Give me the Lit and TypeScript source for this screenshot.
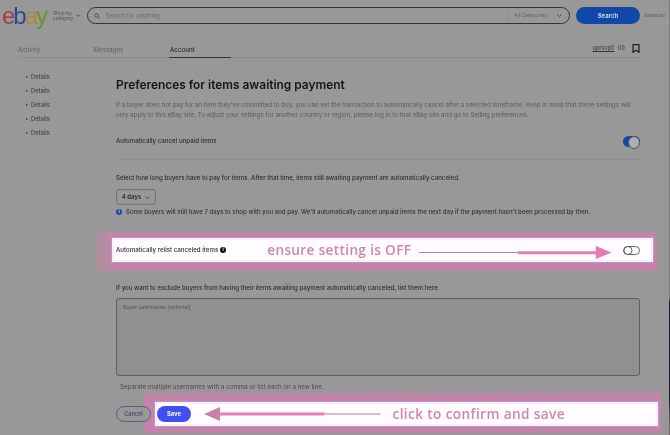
import { LitElement, html, css } from "lit";
import { customElement } from "lit/decorators.js";

const chevron = html`<svg class="chev" viewBox="0 0 10 6"><path d="M1 1l4 4 4-4" fill="none" stroke="currentColor" stroke-width="1.5"/></svg>`;

@customElement("app-root")
export class AppRoot extends LitElement {
  static styles = css`
    :host { display: block; width: 670px; height: 435px; overflow: hidden; }
    * { box-sizing: border-box; }
    .page {
      position: relative; width: 670px; height: 435px; overflow: hidden; background: #989898; color: #333;
      font-family: Inter, "Liberation Sans", sans-serif; font-size: 6.2px; line-height: 10px;
      filter: blur(0.35px); display: flex; flex-direction: column;
    }
    .edge {
      position: absolute; top: 0; right: 0; width: 1px; height: 435px;
      background: linear-gradient(#7c7c7c 0 298px, #1d1436 302px 400px, #7a5a70 420px);
    }
    .header { display: flex; align-items: center; height: 17px; margin: 7px 0 0 2px; flex: none; }
    .logo {
      width: 51px; height: 17px; font: 400 24px/17px "Liberation Sans", sans-serif;
      letter-spacing: -2px; white-space: nowrap; display: block;
    }
    .logo .e { color: #a83a40; } .logo .b { color: #1d4f97; } .logo .a { color: #ad8a3a; } .logo .y { color: #6f8f2d; }
    .shop { width: 20px; font-size: 4.8px; line-height: 5px; color: #555; }
    .shop-chev { width: 4px; height: 3px; margin: 0 7px 0 3px; color: #444; flex: none; }
    .search {
      width: 483px; height: 17px; border: 1px solid #333; border-radius: 9px; display: flex; align-items: center;
      padding: 0 6px 0 6px; color: #6c6c6c; font-size: 5.8px;
    }
    .search svg.mag { width: 6px; height: 6px; margin-right: 6px; color: #444; }
    .search .q { flex: 1; }
    .cat { width: 50px; font-size: 5px; color: #666; border-left: 1px solid #8f8f8f; padding-left: 6px; height: 15px; line-height: 15px; }
    .search .chev { width: 5px; height: 3px; color: #333; margin-right: 1px; }
    .go {
      width: 64px; height: 17px; margin-left: 6px; border-radius: 9px; background: #0f48a8; color: #c9d4e8;
      font-weight: 700; font-size: 6px; line-height: 17px; text-align: center;
    }
    .adv { margin-left: 4px; font-size: 4.3px; color: #555; }
    .tabs {
      display: flex; width: 622px; height: 15px; margin: 19px 0 0 18px; border-bottom: 1px solid #8c8c8c;
      align-items: flex-start; flex: none; color: #626262; font-size: 6.2px; line-height: 14px;
    }
    .tab { width: 75.5px; }
    .tab.on { width: 62px; height: 15px; color: #2c2c2c; border-bottom: 1px solid #333; font-weight: 500; padding-left: 1px; }
    .user { margin-left: auto; display: flex; color: #333; font-size: 5.6px; line-height: 11px; }
    .user u { margin-right: 3px; }
    .user svg { width: 8px; height: 9px; margin: 1px 0 0 7px; color: #222; }
    .body { display: flex; flex: 1; min-height: 0; }
    .side { width: 116px; list-style: none; margin: 0; padding: 12px 0 0 26px; flex: none; font-size: 5.8px; font-weight: 500; color: #444; }
    .side li { display: flex; align-items: center; height: 13.9px; }
    .side li::before {
      content: ""; width: 0; height: 0; border-left: 2.5px solid #333; border-top: 1.6px solid transparent;
      border-bottom: 1.6px solid transparent; margin-right: 3px;
    }
    .main { width: 524px; flex: none; }
    h1 { margin: 18px 0 0; font-size: 11.9px; line-height: 18px; font-weight: 600; color: #161616; white-space: nowrap; }
    .intro { margin: 6px 0 0; color: #5c5c5c; width: 524px; white-space: nowrap; }
    .toggle-row { display: flex; justify-content: space-between; align-items: center; height: 12px; margin-top: 15px; }
    .strong { color: #2e2e2e; font-weight: 500; font-size: 6.15px; }
    .switch { width: 17px; height: 11px; border-radius: 6px; background: #1a46aa; position: relative; flex: none; }
    .switch::after {
      content: ""; position: absolute; right: 0; top: 0; width: 10px; height: 11px; border-radius: 50%;
      background: #aeaeae; border: 1px solid #555;
    }
    hr { border: 0; border-top: 1px solid #8e8e8e; margin: 12px 0 0; }
    .select-label { margin: 13px 0 0; color: #2e2e2e; font-weight: 500; font-size: 6.15px; }
    .sel {
      display: flex; width: 40px; height: 16px; margin-top: 6px; border: 1px solid #777; border-radius: 3px;
      align-items: center; justify-content: center; gap: 4px; font-weight: 600; font-size: 6px; color: #2b2b2b;
      box-shadow: 0 0 0 1px #8f8f8f inset;
    }
    .sel .chev { width: 5px; height: 3px; }
    .note { display: flex; align-items: center; gap: 4px; margin-top: 2px; height: 10px; color: #333; font-size: 6.1px; font-weight: 500; white-space: nowrap; }
    .dot {
      width: 6px; height: 6px; border-radius: 50%; background: #1e45a8; color: #ddd; font-size: 4.5px; line-height: 6px;
      text-align: center; font-weight: 700; flex: none;
    }
    .callout {
      position: relative; z-index: 0; display: flex; align-items: center; height: 24px; margin: 21px -13px 0 -4px;
      padding: 0 13px 0 4px;
    }
    .callout::before {
      content: ""; position: absolute; z-index: -1; top: -6px; bottom: -9px; left: -3px; right: -4px; background: #c483a9;
    }
    .callout::after {
      content: ""; position: absolute; z-index: -2; top: -6px; bottom: -9px; left: -15px; right: -4px; background: #b68c9f;
    }
    .inner-white { position: absolute; inset: 0; z-index: -1; background: #fffcff; box-shadow: inset 0 0 0 2px #fdeefb, 0 0 0 1px #bf93cc; }
    .callout .dot { background: #111; margin-left: 2px; color: #eee; }
    .shout {
      font-family: "Open Sans", "Liberation Sans", sans-serif; font-weight: 600; font-size: 13.6px; line-height: 20px;
      color: #cf86ae; white-space: nowrap; letter-spacing: .35px;
    }
    .c1 .shout { margin-left: 41px; }
    .arrow { flex: 1; height: 14px; margin: 3px 11px 0 8px; display: block; min-width: 0; }
    .off { width: 17px; height: 9px; flex: none; display: block; }
    .exclude { margin: 21px 0 0; color: #2e2e2e; font-weight: 500; font-size: 6.15px; }
    .ta {
      height: 78px; margin-top: 5px; border: 1px solid #5e5e5e; border-radius: 3px; background: #909090;
      padding: 3px 6px; color: #555; font-size: 5.2px;
    }
    .hint { margin: 6px 0 0 4px; color: #4c4c4c; }
    .actions { display: flex; align-items: center; height: 24px; margin: 10px 0 0; }
    .cancel {
      position: relative; z-index: 1; width: 35px; height: 16px; border: 1px solid #5e5e86; border-radius: 8px; color: #3e3e7a;
      font-weight: 500; font-size: 5.6px; line-height: 14px; text-align: center; flex: none; background: #989898;
    }
    .c2 { flex: 1; margin: 0 -18px 0 4px; height: 24px; padding: 0 93px 0 2px; }
    .c2::before { top: -9px; bottom: -7px; left: -11px; right: -3px; }
    .c2::after { display: none; }
    .save {
      width: 34px; height: 16px; border-radius: 8px; background: #3f4ff0; color: #f2f4ff; font-weight: 700; font-size: 5.8px;
      line-height: 16px; text-align: center; flex: none;
    }
    .c2 .arrow { margin: 0 12px 0 13px; }
    .c2 .shout { letter-spacing: .4px; }
  `;

  render() {
    return html`<div class="page">
      <div class="header">
        <div class="logo"><span class="e">e</span><span class="b">b</span><span class="a">a</span><span class="y">y</span></div>
        <div class="shop">Shop by category</div>
        <svg class="shop-chev" viewBox="0 0 10 6"><path d="M1 1l4 4 4-4" fill="none" stroke="currentColor" stroke-width="2"/></svg>
        <div class="search">
          <svg class="mag" viewBox="0 0 12 12"><circle cx="5" cy="5" r="3.6" fill="none" stroke="currentColor" stroke-width="1.6"/><path d="M8 8l3 3" stroke="currentColor" stroke-width="1.6"/></svg>
          <span class="q">Search for anything</span>
          <span class="cat">All Categories</span>
          ${chevron}
        </div>
        <div class="go">Search</div>
        <div class="adv">Advanced</div>
      </div>
      <div class="tabs">
        <div class="tab">Activity</div>
        <div class="tab">Messages</div>
        <div class="tab on">Account</div>
        <div class="user"><u>uprsvp0</u><span>(0)</span>
          <svg viewBox="0 0 8 9"><path d="M1 .7h6v7.6L4 6.2 1 8.300z" fill="none" stroke="currentColor" stroke-width="1.200"/></svg>
        </div>
      </div>
      <div class="body">
        <ul class="side"><li>Details</li><li>Details</li><li>Details</li><li>Details</li><li>Details</li></ul>
        <div class="main">
          <h1>Preferences for items awaiting payment</h1>
          <p class="intro">If a buyer does not pay for an item they've committed to buy, you can set the transaction to automatically cancel after a selected timeframe. Keep in mind that these settings will<br>only apply to this eBay site. To adjust your settings for another country or region, please log in to that eBay site and go to Selling preferences.</p>
          <div class="toggle-row"><span class="strong">Automatically cancel unpaid items</span><span class="switch"></span></div>
          <hr />
          <p class="select-label">Select how long buyers have to pay for items. After that time, items still awaiting payment are automatically canceled.</p>
          <div class="sel">4 days ${chevron}</div>
          <div class="note"><span class="dot">i</span><span>Some buyers will still have 7 days to shop with you and pay. We'll automatically cancel unpaid items the next day if the payment hasn't been processed by then.</span></div>
          <div class="callout c1">
            <span class="inner-white"></span>
            <span class="strong">Automatically relist canceled items</span><span class="dot">i</span>
            <span class="shout">ensure setting is OFF</span>
            <svg class="arrow" viewBox="0 0 194 14" preserveAspectRatio="none"><path d="M0 7.500H172" stroke="#b97c9d" stroke-width="1"/><path d="M100 7.700H182" stroke="#e77cb4" stroke-width="3"/><path d="M178 1l16 6.500-16 6.500z" fill="#e877b6"/></svg>
            <svg class="off" viewBox="0 0 17 9"><rect x=".5" y=".5" width="16" height="8" rx="4" fill="#fff" stroke="#444" stroke-width=".8"/><circle cx="5" cy="4.500" r="4" fill="#fff" stroke="#333" stroke-width=".8"/></svg>
          </div>
          <p class="exclude">If you want to exclude buyers from having their items awaiting payment automatically canceled, list them here.</p>
          <div class="ta">Buyer usernames (optional)</div>
          <p class="hint">Separate multiple usernames with a comma or list each on a new line.</p>
          <div class="actions">
            <div class="cancel">Cancel</div>
            <div class="callout c2">
              <span class="inner-white"></span>
              <div class="save">Save</div>
              <svg class="arrow" viewBox="0 0 176 14" preserveAspectRatio="none"><path d="M0 7l16-7v14z" fill="#c583ac"/><path d="M14 7H120" stroke="#e77cb4" stroke-width="3"/><path d="M120 7H176" stroke="#b97c9d" stroke-width="1"/></svg>
              <span class="shout">click to confirm and save</span>
            </div>
          </div>
        </div>
      </div>
      <div class="edge"></div>
    </div>`;
  }
}
